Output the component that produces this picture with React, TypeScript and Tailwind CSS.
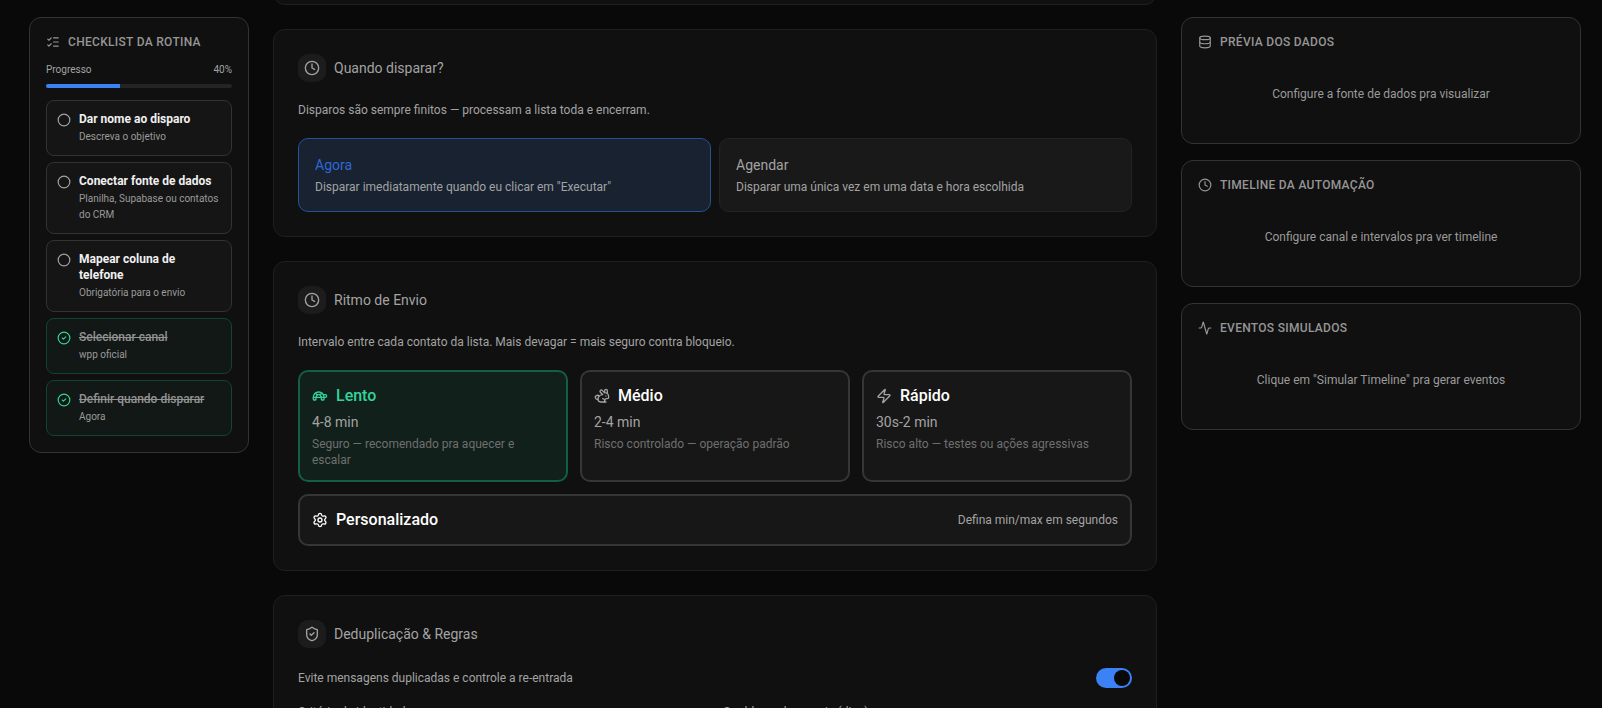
import { useState } from "react";
import type { ReactNode } from "react";
import {
  Activity,
  Circle,
  CircleCheck,
  Clock,
  Database,
  ListChecks,
  Rabbit,
  Settings,
  ShieldCheck,
  Turtle,
  Zap,
} from "lucide-react";
import type { LucideIcon } from "lucide-react";
import clsx from "clsx";

const STEPS = [
  { title: "Dar nome ao disparo", hint: "Descreva o objetivo", done: false },
  { title: "Conectar fonte de dados", hint: "Planilha, Supabase ou contatos do CRM", done: false },
  { title: "Mapear coluna de telefone", hint: "Obrigatória para o envio", done: false },
  { title: "Selecionar canal", hint: "wpp oficial", done: true },
  { title: "Definir quando disparar", hint: "Agora", done: true },
];

const TRIGGERS = [
  { id: "now", title: "Agora", text: 'Disparar imediatamente quando eu clicar em "Executar"' },
  { id: "schedule", title: "Agendar", text: "Disparar uma única vez em uma data e hora escolhida" },
];

const PACES = [
  { id: "slow", icon: Turtle, title: "Lento", range: "4-8 min", text: "Seguro — recomendado pra aquecer e escalar" },
  { id: "medium", icon: Rabbit, title: "Médio", range: "2-4 min", text: "Risco controlado — operação padrão" },
  { id: "fast", icon: Zap, title: "Rápido", range: "30s-2 min", text: "Risco alto — testes ou ações agressivas" },
];

const PREVIEWS = [
  { icon: Database, title: "Prévia dos dados", text: "Configure a fonte de dados pra visualizar" },
  { icon: Clock, title: "Timeline da automação", text: "Configure canal e intervalos pra ver timeline" },
  { icon: Activity, title: "Eventos simulados", text: 'Clique em "Simular Timeline" pra gerar eventos' },
];

function PanelTitle({ icon: Icon, children }: { icon: LucideIcon; children: ReactNode }) {
  return (
    <h2 className="flex items-center gap-2 text-xs font-medium tracking-wide text-[#969696] uppercase">
      <Icon className="size-3.5 shrink-0" aria-hidden="true" />
      {children}
    </h2>
  );
}

function Section({ icon: Icon, title, children }: { icon: LucideIcon; title: string; children: ReactNode }) {
  return (
    <section className="rounded-xl border border-[#1f1f1f] bg-[#101010] p-6">
      <header className="mb-5 flex items-center gap-2">
        <span className="flex size-7 items-center justify-center rounded-[10px] bg-[#1c1c1c]">
          <Icon className="size-4 text-[#a3a3a3]" aria-hidden="true" />
        </span>
        <h2 className="text-sm text-[#a3a3a3]">{title}</h2>
      </header>
      {children}
    </section>
  );
}

function Checklist() {
  const done = STEPS.filter((s) => s.done).length;
  const percent = Math.round((done / STEPS.length) * 100);

  return (
    <aside className="w-[220px] shrink-0 rounded-xl border border-[#333] bg-[#101010] p-4">
      <PanelTitle icon={ListChecks}>Checklist da rotina</PanelTitle>
      <div className="mt-3 flex justify-between text-[10px] leading-4 text-[#a3a3a3]">
        <span>Progresso</span>
        <span>{percent}%</span>
      </div>
      <div className="mt-1.5 h-1 overflow-hidden rounded-full bg-[#242424]">
        <div className="h-full bg-[#3b82f6]" style={{ width: `${percent}%` }} />
      </div>
      <ul className="mt-3 flex flex-col gap-1.5">
        {STEPS.map((step) => (
          <li
            key={step.title}
            className={clsx(
              "flex items-start gap-2 rounded-lg border p-2.5",
              step.done ? "border-[#11452f] bg-[#111815]" : "border-[#333] bg-[#151515]",
            )}
          >
            {step.done ? (
              <CircleCheck className="mt-0.5 size-3.5 shrink-0 text-[#34d399]" aria-hidden="true" />
            ) : (
              <Circle className="mt-0.5 size-3.5 shrink-0 text-[#a3a3a3]" aria-hidden="true" />
            )}
            <div>
              <p
                className={clsx(
                  "text-xs",
                  step.done ? "font-medium text-[#939393] line-through" : "font-bold text-[#f0f0f0]",
                )}
              >
                {step.title}
              </p>
              <p className="mt-0.5 text-[10px] leading-4 text-[#9a9a9a]">{step.hint}</p>
            </div>
          </li>
        ))}
      </ul>
    </aside>
  );
}

export default function App() {
  const [trigger, setTrigger] = useState("now");
  const [pace, setPace] = useState("slow");
  const [dedupe, setDedupe] = useState(true);

  return (
    <div className="flex h-screen items-start gap-6 overflow-hidden bg-[#090909] pr-[21px] pl-[29px] font-[Roboto,sans-serif]">
      <div className="pt-[17px]">
        <Checklist />
      </div>

      <main className="flex min-w-0 flex-1 flex-col gap-6">
        {/* tail of the section scrolled out above */}
        <div className="-mt-[35px] h-10 rounded-xl border border-[#1f1f1f] bg-[#101010]" />

        <Section icon={Clock} title="Quando disparar?">
          <p className="text-xs text-[#a3a3a3]">
            Disparos são sempre finitos — processam a lista toda e encerram.
          </p>
          <div className="mt-5 grid grid-cols-2 gap-2">
            {TRIGGERS.map((t) => (
              <button
                key={t.id}
                type="button"
                aria-pressed={trigger === t.id}
                onClick={() => setTrigger(t.id)}
                className={clsx(
                  "rounded-[10px] border p-4 text-left",
                  trigger === t.id ? "border-[#28518f] bg-[#182230]" : "border-[#242424] bg-[#191919]",
                )}
              >
                <span
                  className={clsx(
                    "block text-sm",
                    trigger === t.id ? "text-[#2f67d8]" : "text-[#a3a3a3]",
                  )}
                >
                  {t.title}
                </span>
                <span className="mt-1 block text-xs text-[#a3a3a3]">{t.text}</span>
              </button>
            ))}
          </div>
        </Section>

        <Section icon={Clock} title="Ritmo de Envio">
          <p className="text-xs text-[#a3a3a3]">
            Intervalo entre cada contato da lista. Mais devagar = mais seguro contra bloqueio.
          </p>
          <div className="mt-5 grid grid-cols-3 gap-3">
            {PACES.map(({ id, icon: Icon, title, range, text }) => {
              const active = pace === id;
              return (
                <button
                  key={id}
                  type="button"
                  aria-pressed={active}
                  onClick={() => setPace(id)}
                  className={clsx(
                    "flex flex-col items-start rounded-[10px] border-2 p-3 text-left",
                    active ? "border-[#125f45] bg-[#11201b]" : "border-[#363636] bg-[#171717]",
                  )}
                >
                  <span className="flex items-center gap-2">
                    <Icon
                      className={clsx("size-4", active ? "text-[#34d399]" : "text-[#a3a3a3]")}
                      aria-hidden="true"
                    />
                    <span className={clsx("text-base font-medium", active ? "text-[#34d399]" : "text-white")}>
                      {title}
                    </span>
                  </span>
                  <span className="mt-1 text-sm text-[#a3a3a3]">{range}</span>
                  <span className="mt-1 text-xs text-[#6f6f6f]">{text}</span>
                </button>
              );
            })}
            <button
              type="button"
              aria-pressed={pace === "custom"}
              onClick={() => setPace("custom")}
              className="col-span-3 flex items-center justify-between rounded-[10px] border-2 border-[#363636] bg-[#171717] p-3"
            >
              <span className="flex items-center gap-2 text-base font-medium text-white">
                <Settings className="size-4" aria-hidden="true" />
                Personalizado
              </span>
              <span className="text-xs text-[#a3a3a3]">Defina min/max em segundos</span>
            </button>
          </div>
        </Section>

        <Section icon={ShieldCheck} title="Deduplicação & Regras">
          <div className="flex items-center justify-between">
            <span id="dedupe-label" className="text-xs text-[#a3a3a3]">
              Evite mensagens duplicadas e controle a re-entrada
            </span>
            <button
              type="button"
              role="switch"
              aria-checked={dedupe}
              aria-labelledby="dedupe-label"
              onClick={() => setDedupe(!dedupe)}
              className={clsx(
                "flex h-5 w-9 items-center rounded-full p-0.5",
                dedupe ? "justify-end bg-[#3b82f6]" : "justify-start bg-[#333]",
              )}
            >
              <span className="size-4 rounded-full bg-[#090909]" />
            </button>
          </div>
          <div className="mt-4 grid grid-cols-2 gap-4 text-xs text-[#a3a3a3]">
            <div>
              <label htmlFor="identity">Critério de identidade</label>
              <select id="identity" className="mt-2 h-9 w-full rounded-lg border border-[#333] bg-[#171717] px-3">
                <option>Telefone</option>
              </select>
            </div>
            <div>
              <label htmlFor="cooldown">Cooldown de reenvio (dias)</label>
              <input
                id="cooldown"
                type="number"
                defaultValue={7}
                className="mt-2 h-9 w-full rounded-lg border border-[#333] bg-[#171717] px-3"
              />
            </div>
          </div>
        </Section>
      </main>

      <aside className="flex w-[400px] shrink-0 flex-col gap-4 pt-[17px]">
        {PREVIEWS.map((p) => (
          <section key={p.title} className="rounded-xl border border-[#333] bg-[#101010] p-4">
            <PanelTitle icon={p.icon}>{p.title}</PanelTitle>
            <p className="mt-3 py-6 text-center text-xs leading-[17px] text-[#9a9a9a]">{p.text}</p>
          </section>
        ))}
      </aside>
    </div>
  );
}
